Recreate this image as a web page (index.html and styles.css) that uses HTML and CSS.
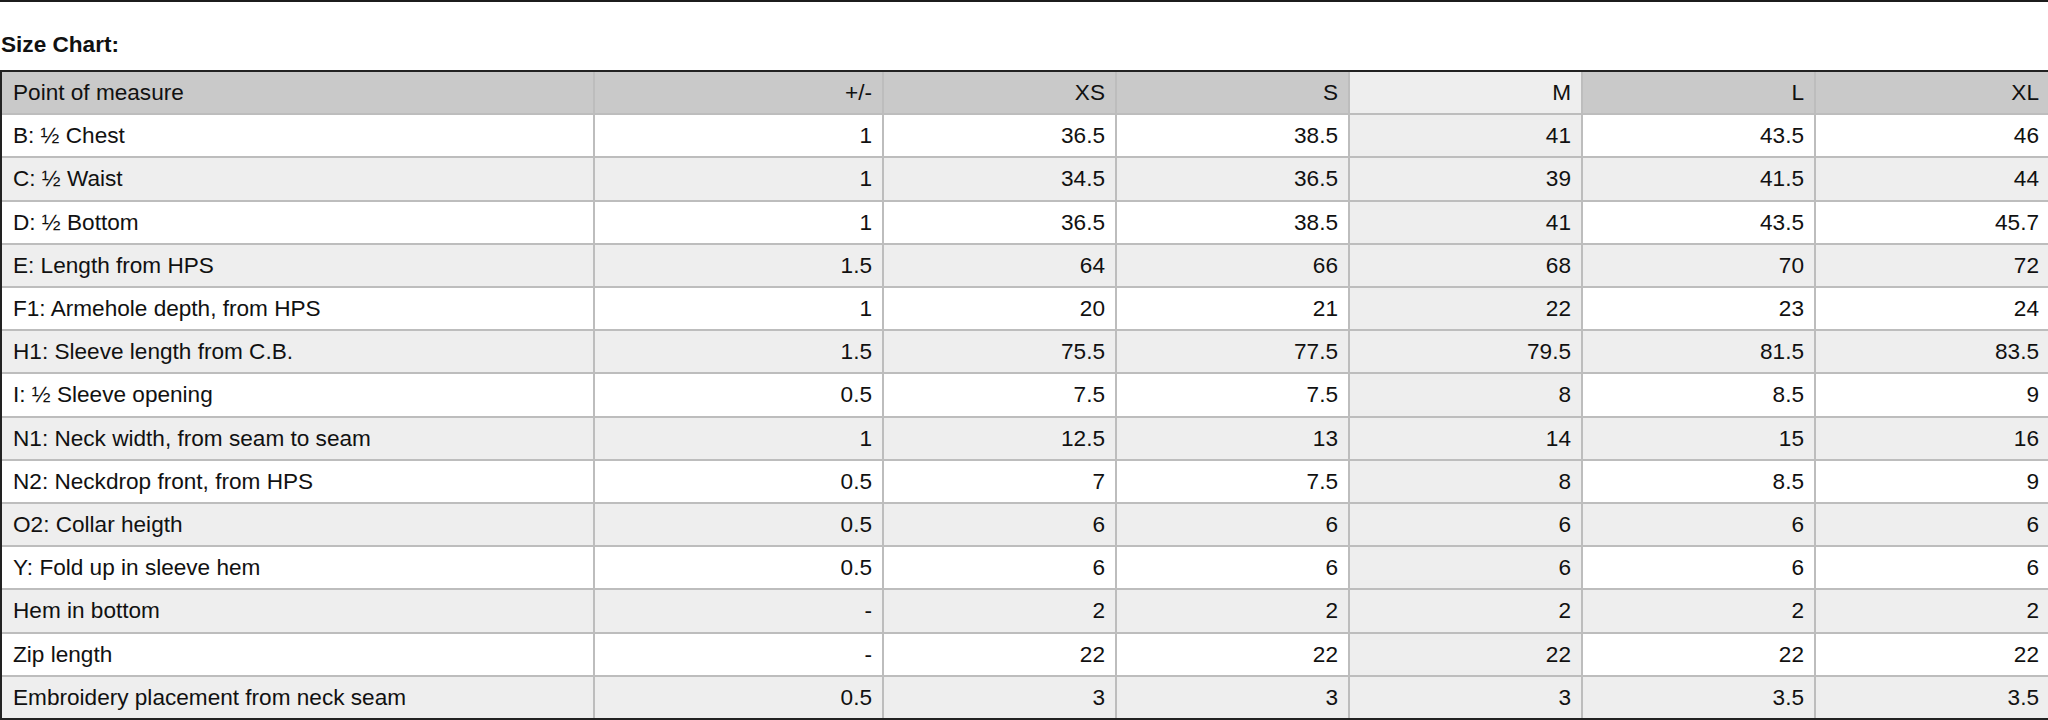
FILE: index.html
```html
<!DOCTYPE html>
<html lang="en">
<head>
<meta charset="utf-8">
<title>Size Chart</title>
<link rel="stylesheet" href="styles.css">
</head>
<body>
<div class="page">
  <div class="rule"></div>
  <h2 class="title">Size Chart:</h2>
  <table class="chart">
    <colgroup>
      <col class="c-pom">
      <col class="c-tol">
      <col class="c-size">
      <col class="c-size">
      <col class="c-size">
      <col class="c-size">
      <col class="c-size">
    </colgroup>
    <thead>
      <tr>
        <th class="left">Point of measure</th>
        <th>+/-</th>
        <th>XS</th>
        <th>S</th>
        <th class="hl">M</th>
        <th>L</th>
        <th class="last">XL</th>
      </tr>
    </thead>
    <tbody>
      <tr><td class="left">B: ½ Chest</td><td>1</td><td>36.5</td><td>38.5</td><td class="hl">41</td><td>43.5</td><td class="last">46</td></tr>
      <tr><td class="left">C: ½ Waist</td><td>1</td><td>34.5</td><td>36.5</td><td class="hl">39</td><td>41.5</td><td class="last">44</td></tr>
      <tr><td class="left">D: ½ Bottom</td><td>1</td><td>36.5</td><td>38.5</td><td class="hl">41</td><td>43.5</td><td class="last">45.7</td></tr>
      <tr><td class="left">E: Length from HPS</td><td>1.5</td><td>64</td><td>66</td><td class="hl">68</td><td>70</td><td class="last">72</td></tr>
      <tr><td class="left">F1: Armehole depth, from HPS</td><td>1</td><td>20</td><td>21</td><td class="hl">22</td><td>23</td><td class="last">24</td></tr>
      <tr><td class="left">H1: Sleeve length from C.B.</td><td>1.5</td><td>75.5</td><td>77.5</td><td class="hl">79.5</td><td>81.5</td><td class="last">83.5</td></tr>
      <tr><td class="left">I: ½ Sleeve opening</td><td>0.5</td><td>7.5</td><td>7.5</td><td class="hl">8</td><td>8.5</td><td class="last">9</td></tr>
      <tr><td class="left">N1: Neck width, from seam to seam</td><td>1</td><td>12.5</td><td>13</td><td class="hl">14</td><td>15</td><td class="last">16</td></tr>
      <tr><td class="left">N2: Neckdrop front, from HPS</td><td>0.5</td><td>7</td><td>7.5</td><td class="hl">8</td><td>8.5</td><td class="last">9</td></tr>
      <tr><td class="left">O2: Collar heigth</td><td>0.5</td><td>6</td><td>6</td><td class="hl">6</td><td>6</td><td class="last">6</td></tr>
      <tr><td class="left">Y: Fold up in sleeve hem</td><td>0.5</td><td>6</td><td>6</td><td class="hl">6</td><td>6</td><td class="last">6</td></tr>
      <tr><td class="left">Hem in bottom</td><td>-</td><td>2</td><td>2</td><td class="hl">2</td><td>2</td><td class="last">2</td></tr>
      <tr><td class="left">Zip length</td><td>-</td><td>22</td><td>22</td><td class="hl">22</td><td>22</td><td class="last">22</td></tr>
      <tr class="final"><td class="left">Embroidery placement from neck seam</td><td>0.5</td><td>3</td><td>3</td><td class="hl">3</td><td>3.5</td><td class="last">3.5</td></tr>
    </tbody>
  </table>
</div>
</body>
</html>
```

FILE: styles.css
```css
html, body {
  margin: 0;
  padding: 0;
  background: #ffffff;
  overflow: hidden;
}

body {
  font-family: "Liberation Sans", Arial, sans-serif;
  color: #111111;
}

.page {
  width: 2048px;
}

.rule {
  height: 0;
  border-top: 2px solid #1c1c1c;
}

.title {
  margin: 30px 0 13px 1px;
  font-size: 22.6px;
  line-height: 25px;
  font-weight: bold;
}

.chart {
  width: 2050px;
  table-layout: fixed;
  border-collapse: separate;
  border-spacing: 0;
  border: 2px solid #222222;
  font-size: 22.6px;
  line-height: 25.2px;
}

.c-pom { width: 593px; }
.c-tol { width: 289px; }
.c-size { width: 233px; }

.chart th,
.chart td {
  box-sizing: border-box;
  padding: 8px 10px;
  text-align: right;
  font-weight: normal;
  white-space: nowrap;
  border-right: 2px solid #bdbdbd;
  border-bottom: 2px solid #bdbdbd;
  vertical-align: middle;
}

.chart th {
  background: #c9c9c9;
}

.chart th.left,
.chart td.left {
  text-align: left;
  padding-left: 11px;
}

.chart .last {
  border-right: none;
}

.chart tbody tr:nth-child(even) td {
  background: #eeeeee;
}

.chart th.hl,
.chart td.hl,
.chart tbody tr:nth-child(even) td.hl {
  background: #eeeeee;
}

.chart tr.final td {
  border-bottom: none;
}
```
